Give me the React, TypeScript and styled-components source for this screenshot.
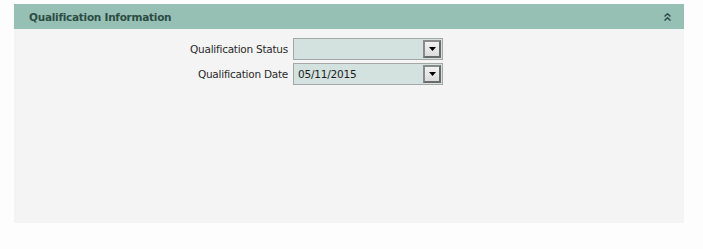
import React from "react";
import styled, { createGlobalStyle } from "styled-components";

const Global = createGlobalStyle`
  html, body { margin: 0; padding: 0; background: #fdfdfd; }
  body { font-family: "DejaVu Sans", Verdana, sans-serif; }
`;

const Page = styled.div`
  padding: 4px 19px 0 14px;
`;

const Panel = styled.section`
  width: 670px;
  background: #f4f4f4;
  height: 219px;
  display: flex;
  flex-direction: column;
`;

const Header = styled.div`
  height: 25px;
  background: #96c0b4;
  display: flex;
  align-items: center;
  justify-content: space-between;
  padding: 0 13px 0 15px;
  box-sizing: border-box;
`;

const Title = styled.span`
  font-family: "DejaVu Sans", Verdana, sans-serif;
  font-weight: bold;
  font-size: 10.5px;
  color: #2d4c45;
  letter-spacing: -0.26px;
`;

const Collapse = styled.svg`
  width: 7px;
  height: 8px;
  display: block;
`;

const Form = styled.div`
  display: grid;
  grid-template-columns: 279px 150px;
  column-gap: 0;
  row-gap: 3px;
  padding-top: 9px;
  align-items: center;
`;

const Label = styled.label`
  font-family: "DejaVu Sans", Verdana, sans-serif;
  font-size: 10.5px;
  letter-spacing: -0.25px;
  color: #2a2a2a;
  text-align: right;
  padding-right: 5px;
`;

const Select = styled.div`
  height: 22px;
  box-sizing: border-box;
  border: 1px solid #a3a8a7;
  background: #d3e1df;
  display: flex;
  align-items: center;
  justify-content: space-between;
  padding: 0 1px 0 4px;
  font-family: "DejaVu Sans", Verdana, sans-serif;
  font-size: 10.5px;
  letter-spacing: -0.2px;
  color: #1e1e1e;
`;

const DropBtn = styled.div`
  width: 18px;
  height: 18px;
  box-sizing: border-box;
  border: 2px solid #6a6a6a;
  border-top-color: #8a8a8a;
  border-left-color: #8a8a8a;
  background: linear-gradient(#f2f2f2, #dcdcdc);
  display: flex;
  align-items: center;
  justify-content: center;
`;

const Arrow = () => (
  <svg width="7" height="4" viewBox="0 0 7 4">
    <path d="M0 0H7L3.5 4Z" fill="#000" />
  </svg>
);

const fields = [
  { label: "Qualification Status", value: "" },
  { label: "Qualification Date", value: "05/11/2015" },
];

export default function App() {
  return (
    <>
      <Global />
      <Page>
        <Panel>
          <Header>
            <Title>Qualification Information</Title>
            <Collapse viewBox="0 0 7 8">
              <path d="M0.5 3.5L3.5 0.8L6.5 3.5M0.5 7.5L3.5 4.8L6.5 7.5" stroke="#2d4c45" strokeWidth="1.5" fill="none" />
            </Collapse>
          </Header>
          <Form>
            {fields.map((f) => (
              <React.Fragment key={f.label}>
                <Label>{f.label}</Label>
                <Select>
                  <span>{f.value}</span>
                  <DropBtn>
                    <Arrow />
                  </DropBtn>
                </Select>
              </React.Fragment>
            ))}
          </Form>
        </Panel>
      </Page>
    </>
  );
}
